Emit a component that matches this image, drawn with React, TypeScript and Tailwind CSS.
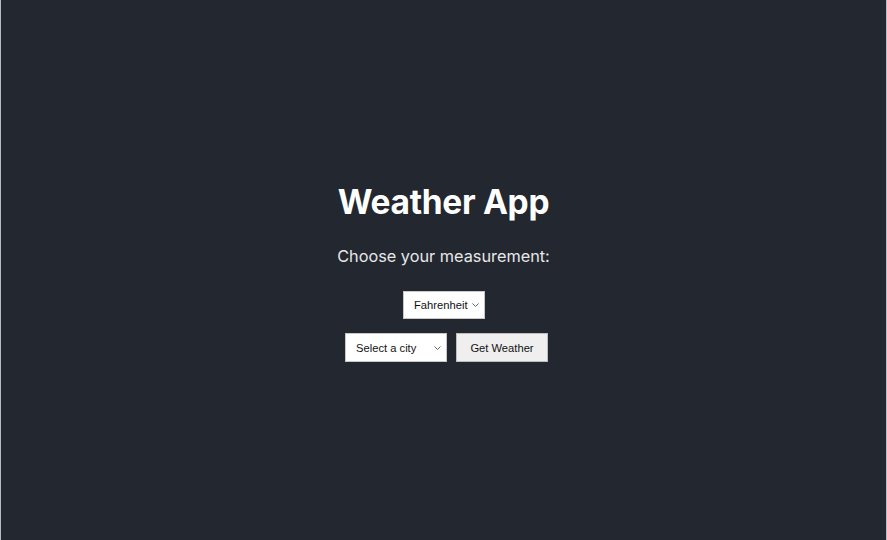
function Chevron() {
  return (
    <svg
      width="7"
      height="5"
      viewBox="0 0 7 5"
      className="pointer-events-none absolute right-[6px] top-1/2 -translate-y-1/2"
    >
      <path d="M0.5 1l3 3 3-3" fill="none" stroke="#666" strokeWidth="1" />
    </svg>
  );
}

export default function App() {
  return (
    <div className="flex h-[540px] w-full border-x border-[#b8bcc2] bg-[#23272f] font-['Inter',sans-serif] text-white">
      <div className="flex w-full flex-col items-center pt-[181px]">
        <h1 className="text-[33.5px] font-bold leading-[42px] tracking-[-0.3px]">Weather App</h1>
        <p className="mt-[23px] text-[16.3px] leading-[21px] text-[#e8e8ea]">Choose your measurement:</p>

        <div className="relative mt-[24px] ml-[1px]">
          <select
            defaultValue="f"
            className="h-[28px] w-[82px] appearance-none border border-[#c8c8c8] bg-white pl-[10px] font-['Liberation_Sans',sans-serif] text-[11.2px] text-[#111]"
          >
            <option value="f">Fahrenheit</option>
            <option value="c">Celsius</option>
          </select>
          <Chevron />
        </div>

        <div className="mt-[14px] ml-[6px] flex gap-[9px]">
          <div className="relative">
            <select
              defaultValue=""
              className="h-[29px] w-[102px] appearance-none border border-[#c8c8c8] bg-white pl-[10px] font-['Liberation_Sans',sans-serif] text-[11.2px] text-[#111]"
            >
              <option value="">Select a city</option>
              <option value="ny">New York</option>
              <option value="la">Los Angeles</option>
            </select>
            <Chevron />
          </div>
          <button className="h-[29px] w-[92px] border border-[#bdbdbd] bg-[#efefef] font-['Liberation_Sans',sans-serif] text-[11.2px] text-[#111]">
            Get Weather
          </button>
        </div>
      </div>
    </div>
  );
}
